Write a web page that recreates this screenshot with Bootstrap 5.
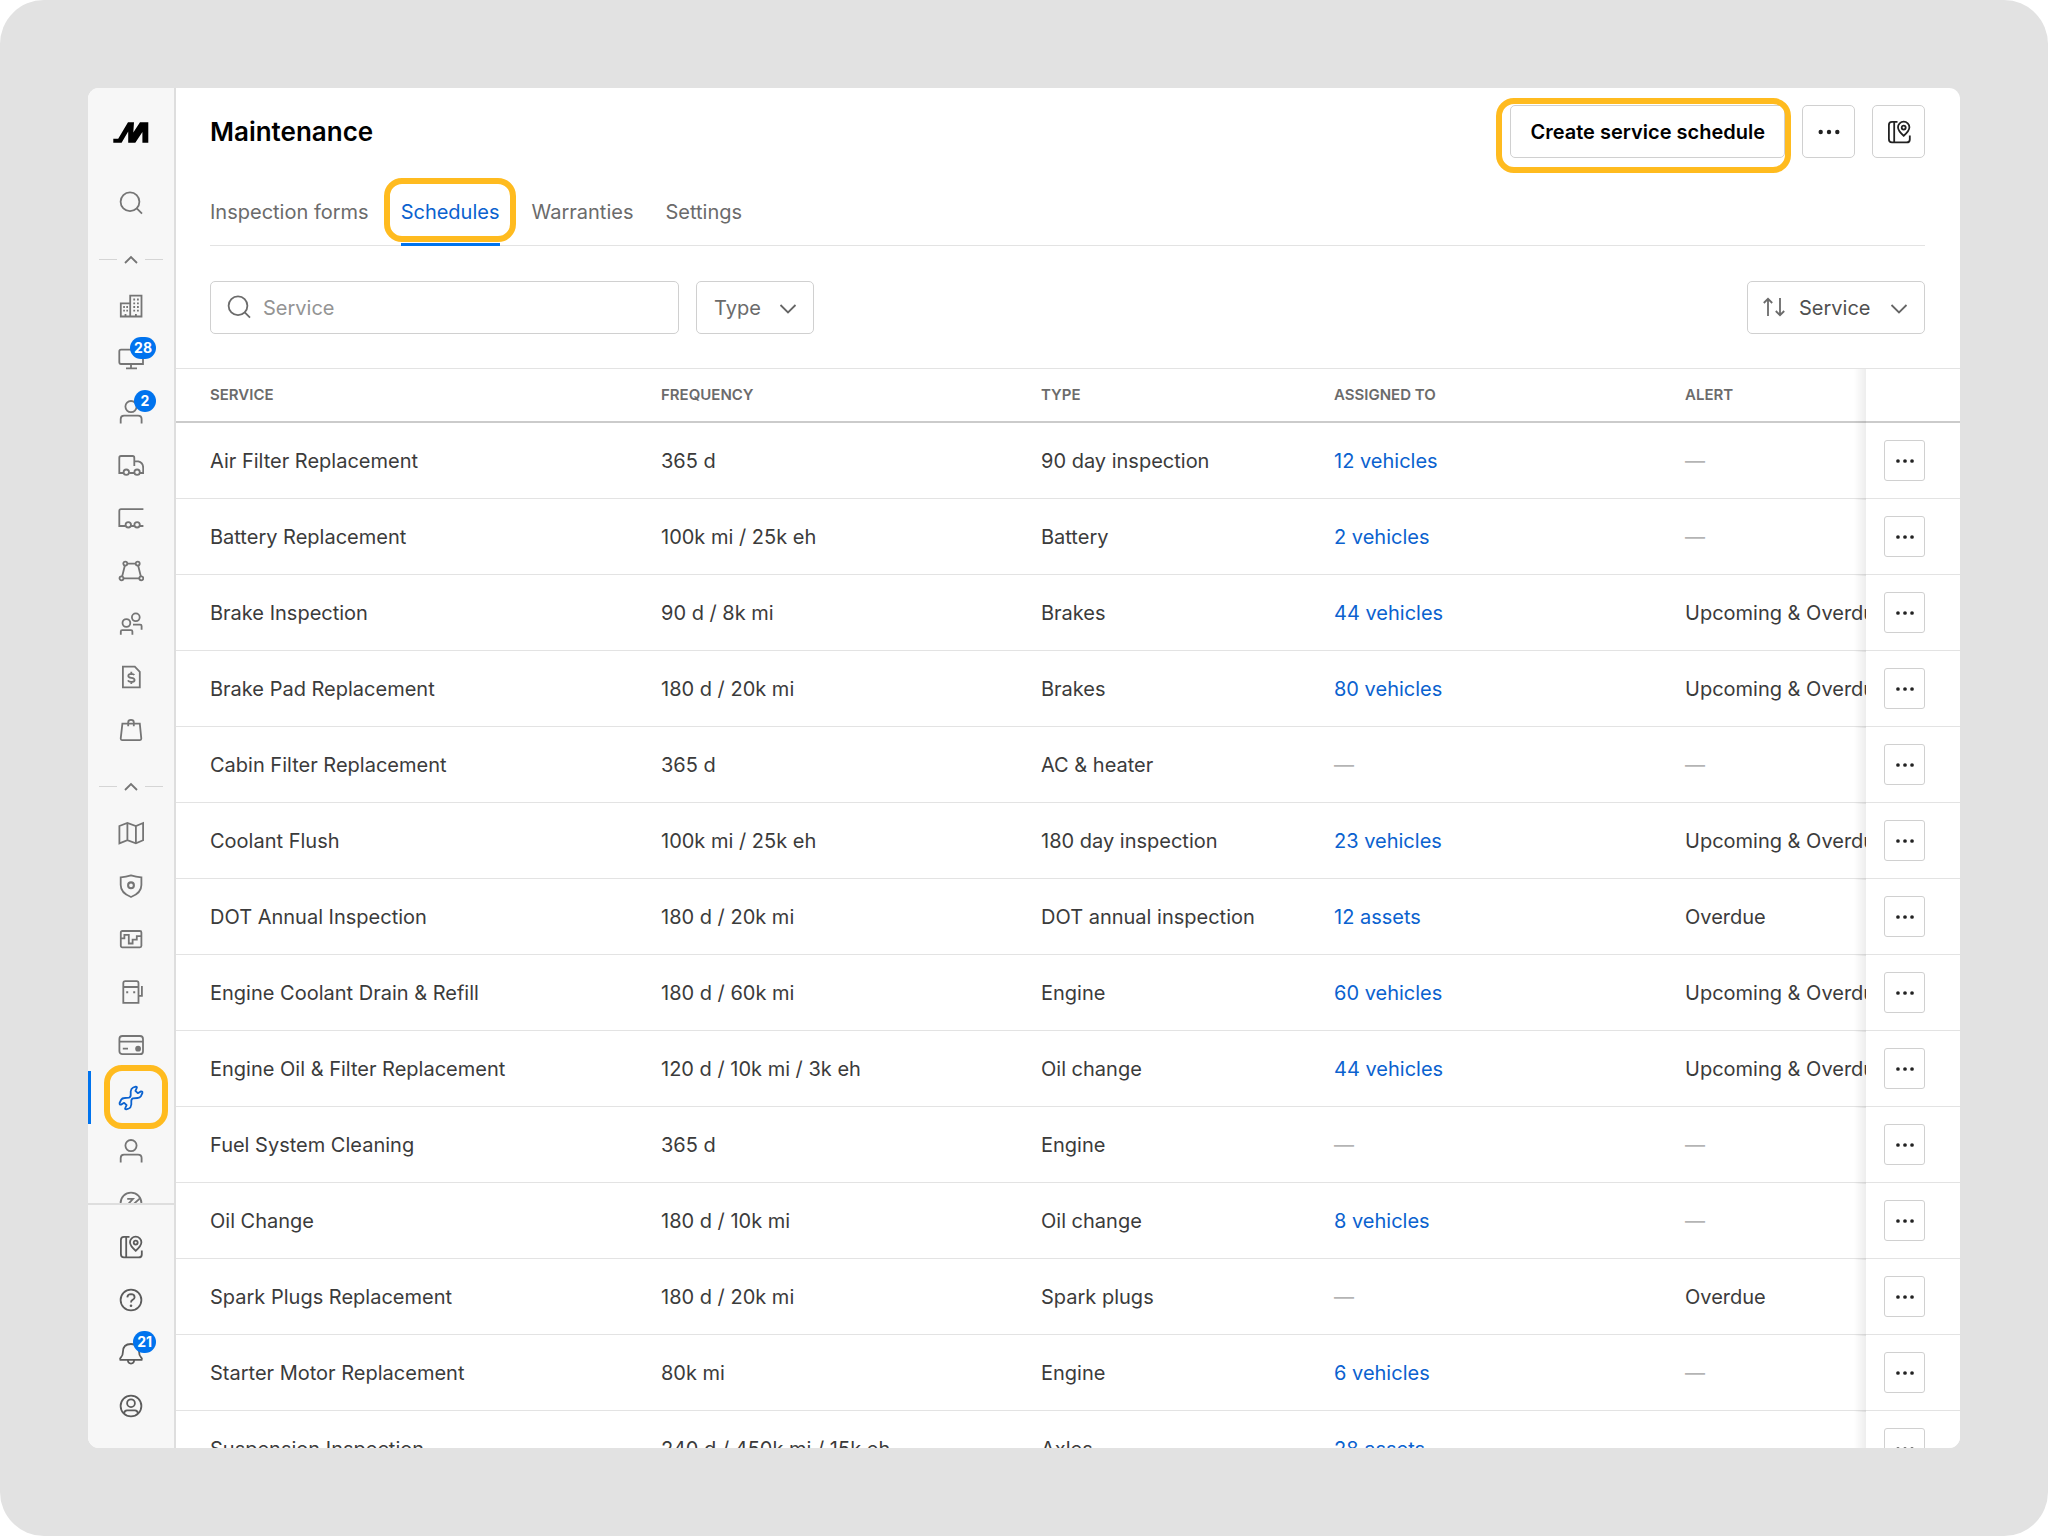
<!DOCTYPE html>
<html lang="en">
<head>
<meta charset="utf-8">
<meta name="viewport" content="width=device-width, initial-scale=1">
<title>Maintenance</title>
<link href="https://cdn.jsdelivr.net/npm/bootstrap@5.3.0/dist/css/bootstrap.min.css" rel="stylesheet">
<style>
  :root { --line: #e3e3e3; --edge: #d0d0d0; --ink: #3b3b3b; --soft: #6b6b6b; --blue: #0b62cf; --bright: #0073ee; --amber: #ffbb1f; }
  body { font-family: Inter, "Liberation Sans", sans-serif; font-size: 20px; line-height: 24px; color: var(--ink); background: #fff; }
  .stage { height: 100vh; padding: 88px; background: #e2e2e2; border-radius: 44px; }
  .app-window { border-radius: 11px; background: #fff; }
  svg { fill: none; stroke: currentColor; stroke-width: 1.8; flex: none; display: block; }
  svg .solid { fill: currentColor; stroke: none; }

  .rail { width: 88px; flex: none; background: #f7f7f7; border-right: 2px solid #dedede; }
  .rail-scroll, .page-main { min-height: 0; min-width: 0; }
  .rail-logo { height: 88px; color: #000; }
  .rail-link { height: 53px; color: #757575; }
  .rail-foot { border-top: 2px solid #dedede; padding: 15px 0 16px; }
  .rail-foot .rail-link { color: #5c5c5c; }
  .rail-link.active { color: var(--blue); }
  .rail-link.active::before { content: ""; position: absolute; left: 0; top: 0; bottom: 0; width: 3px; background: var(--bright); }
  .rail-split { height: 50px; padding: 10px 11px 0; background: none; border: 0; color: #757575; }
  .rail-split::before, .rail-split::after { content: ""; width: 18px; height: 1px; background: #d5d5d5; }
  .rail-count { position: absolute; top: 5px; right: 18px; min-width: 22px; height: 22px; padding: 0 4px; border-radius: 11px; background: var(--bright); color: #fff; font-size: 14px; font-weight: 700; line-height: 22px; text-align: center; }
  .ring { position: absolute; border: 6px solid var(--amber); border-radius: 18px; pointer-events: none; }
  .ring-rail { width: 64px; height: 64px; left: 16px; top: -6px; }
  .ring-tab { inset: 0 -16px 3px -17px; }
  .ring-create { inset: -7px -6px -15px -14px; }

  .page-head { padding: 17px 35px 34px 34px; }
  .head-actions { gap: 17px; }
  h1 { font-size: 26px; line-height: 32px; font-weight: 600; color: #000; }
  .tool-btn { height: 53px; min-width: 53px; border: 1px solid var(--edge); border-radius: 5px; background: #fff; color: #222; }
  .create-btn { padding: 0 19px; font-weight: 600; color: #000; }
  .page-tabs { margin-top: 20px; gap: 32px; border-bottom: 1px solid var(--line); }
  .page-tabs a { padding: 22px 0 21px; color: var(--soft); }
  .page-tabs a.active { color: var(--blue); }
  .page-tabs a.active::after { content: ""; position: absolute; left: 0; right: 0; bottom: -1px; height: 3px; background: var(--bright); }
  .filters { margin-top: 35px; gap: 17px; }
  .search-box { width: 469px; }
  .lead-icon { position: absolute; left: 16px; top: 13px; color: var(--soft); pointer-events: none; }
  .field { height: 53px; border: 1px solid var(--edge); border-radius: 5px; font-size: 20px; line-height: 24px; color: #505050; }
  .field::placeholder { color: #949494; }
  .search-box .field { padding: 0 16px 0 52px; }
  select.field { padding: 0 40px 0 17px; width: 118px; color: var(--soft); background-position: right 16px center; background-size: 18px 18px;
    --bs-form-select-bg-img: url("data:image/svg+xml,%3Csvg xmlns='http://www.w3.org/2000/svg' viewBox='0 0 18 18' fill='none' stroke='%23666' stroke-width='1.8'%3E%3Cpath d='M1.5 6 L9 13.5 L16.5 6'/%3E%3C/svg%3E"); }
  select.sort-field { width: 178px; padding-left: 51px; color: #505050; }

  .schedule-scroll { border-top: 1px solid var(--line); }
  .schedule-table { width: 103%; table-layout: fixed; border-collapse: separate; border-spacing: 0; }
  .schedule-table th { height: 54px; padding: 0 0 0 17px; border-bottom: 2px solid #cbcbcb; font-size: 15px; line-height: 20px; font-weight: 600; color: var(--soft); }
  .schedule-table td { height: 76px; padding: 0 0 0 17px; border-bottom: 1px solid var(--line); white-space: nowrap; }
  .schedule-table th:first-child, .schedule-table td:first-child { padding-left: 34px; }
  .schedule-table td a { color: var(--blue); }
  .schedule-table .pinned { position: sticky; right: 0; padding: 0 0 0 18px; background: #fff; }
  .pinned::before { content: ""; position: absolute; left: -12px; top: 0; bottom: -2px; width: 12px; background: linear-gradient(to right, rgba(0,0,0,0), rgba(0,0,0,.07)); }
  .none { color: #b4b4b4; }
  .row-btn { width: 41px; height: 41px; border: 1px solid var(--edge); border-radius: 3px; background: #fff; color: #222; }
  .c-service { width: 468px; } .c-freq { width: 380px; } .c-type { width: 293px; } .c-assigned { width: 351px; } .c-pin { width: 94px; }
</style>
</head>
<body>

<svg class="d-none" aria-hidden="true">
  <symbol id="i-search" viewBox="0 0 26 26"><circle cx="12" cy="11.7" r="9.4"/><path d="M18.5 18.2 L24 23.7"/></symbol>
  <symbol id="i-book" viewBox="0 0 26 26"><path d="M11.5 2.9 H6 Q2.9 2.9 2.9 6 V20 Q2.9 23.4 6 23.4 H20.6 Q23.8 23.4 23.8 20.4 V16.5 M8.2 2.9 V23.4"/><path d="M17.7 16.8 Q12 11.8 12 8.3 A5.7 5.6 0 0 1 23.4 8.3 Q23.4 11.8 17.7 16.8 Z"/><circle cx="17.7" cy="8.6" r="2"/></symbol>
  <symbol id="i-person" viewBox="0 0 26 26"><circle cx="13" cy="7.6" r="5.6"/><path d="M2.7 24.6 V20 Q2.7 16.6 6 16.6 H20 Q23.6 16.6 23.6 20 V24.6"/></symbol>
  <symbol id="i-dots" viewBox="0 0 26 26"><g class="solid"><circle cx="4.7" cy="13" r="2.2"/><circle cx="13" cy="13" r="2.2"/><circle cx="21.3" cy="13" r="2.2"/></g></symbol>
</svg>

<div class="stage">
  <div class="app-window d-flex h-100 overflow-hidden">

    <nav class="rail d-flex flex-column" aria-label="Main">
      <div class="rail-scroll flex-fill overflow-hidden">
        <a href="#" class="rail-logo d-flex align-items-center justify-content-center" aria-label="Home">
          <svg width="36" height="21" viewBox="0 0 36 21"><path class="solid" d="M0.3 20.7 V16.7 H5.2 L15 0.3 H21 L20.3 10.5 L27 0.3 H35.3 V20.7 H29.4 V10 L22.3 20.7 H15.2 V9.6 L8.6 20.7 Z"/></svg>
        </a>
        <a href="#" class="rail-link d-flex align-items-center justify-content-center" aria-label="Search"><svg width="26" height="26"><use href="#i-search"/></svg></a>

        <button class="rail-split d-flex w-100 align-items-center justify-content-between" aria-label="Collapse assets"><svg width="14" height="9" viewBox="0 0 14 9"><path d="M1 8 L7 2 L13 8"/></svg></button>

        <a href="#" class="rail-link d-flex align-items-center justify-content-center" aria-label="Facilities"><svg width="26" height="26" viewBox="0 0 26 26"><path d="M12.2 2.7 H23.5 V23.5 H12.2 Z M12.2 10.4 H2.8 V23.5 H12.2"/><path d="M15.3 6.5 h1.8 M19 6.5 h1.8 M15.3 10.3 h1.8 M19 10.3 h1.8 M15.3 14 h1.8 M19 14 h1.8 M15.3 17.6 h1.8 M19 17.6 h1.8 M5.2 14 h1.7 M8.3 14 h1.7 M5.2 17.7 h1.7 M8.3 17.7 h1.7 M17.9 21 v2 M7.5 21 v2"/></svg></a>
        <a href="#" class="rail-link position-relative d-flex align-items-center justify-content-center" aria-label="Devices"><svg width="26" height="26" viewBox="0 0 26 26"><path d="M25 18 H3 Q1.3 18 1.3 16.3 V5.5 Q1.3 3.7 3 3.7 H23.4 Q25 3.7 25 5.5 Z M13 18 V22 M8 22.4 H19"/></svg><span class="rail-count">28</span></a>
        <a href="#" class="rail-link position-relative d-flex align-items-center justify-content-center" aria-label="Drivers"><svg width="26" height="26"><use href="#i-person"/></svg><span class="rail-count">2</span></a>
        <a href="#" class="rail-link d-flex align-items-center justify-content-center" aria-label="Vehicles"><svg width="26" height="26" viewBox="0 0 26 26"><path d="M5.4 21 H1.3 V5.8 Q1.3 4 3 4 H14.6 Q16.3 4 16.3 5.8 V14 M16.3 9.4 H20.3 Q25.2 10.5 25.2 16 V21 H22 M11.2 21 H16.2"/><circle cx="8.3" cy="20.2" r="2.7"/><circle cx="19.1" cy="20.2" r="2.7"/></svg></a>
        <a href="#" class="rail-link d-flex align-items-center justify-content-center" aria-label="Trailers"><svg width="26" height="26" viewBox="0 0 26 26"><path d="M25.4 4.2 H3 Q1.3 4.2 1.3 6 V21 H7.5 M22 21 H25.4 M13 21 H16.4"/><circle cx="10.3" cy="19.8" r="2.7"/><circle cx="19.1" cy="19.8" r="2.7"/></svg></a>
        <a href="#" class="rail-link d-flex align-items-center justify-content-center" aria-label="Geofences"><svg width="26" height="26" viewBox="0 0 26 26"><path d="M9.3 5.7 H17.7 M6.8 7.8 L4.2 18.2 M20.2 7.8 L22.8 18.2 M5.6 20.3 H21.4"/><circle cx="7.3" cy="5.6" r="2"/><circle cx="19.7" cy="5.6" r="2"/><circle cx="3.5" cy="20.3" r="2"/><circle cx="23.3" cy="20.3" r="2"/></svg></a>
        <a href="#" class="rail-link d-flex align-items-center justify-content-center" aria-label="Groups"><svg width="26" height="26" viewBox="0 0 26 26"><circle cx="8.4" cy="12" r="3.9"/><circle cx="17.8" cy="6.3" r="3.9"/><path d="M2.8 23.8 V20.6 Q2.8 19.2 4.2 19.2 H13 Q14.4 19.2 14.4 20.6 V23.8 M15 13.7 H22.2 Q23.6 13.7 23.6 15.1 V18.7"/></svg></a>
        <a href="#" class="rail-link d-flex align-items-center justify-content-center" aria-label="Billing"><svg width="26" height="26" viewBox="0 0 26 26"><path d="M4.9 2.7 H16.8 L21.8 7.8 V23.4 H4.9 Z"/><path d="M16.3 11 Q15.6 9.8 13.3 9.8 Q10.3 9.9 10.3 12 Q10.3 13.5 13.3 13.8 Q16.6 14.1 16.6 16 Q16.6 18 13.3 18 Q10.6 18 9.9 16.4 M13.3 7.8 V9.8 M13.3 18 V20"/></svg></a>
        <a href="#" class="rail-link d-flex align-items-center justify-content-center" aria-label="Marketplace"><svg width="26" height="26" viewBox="0 0 26 26"><path d="M4.4 6.6 H21.8 L23.3 21.6 Q23.3 23.1 22 23.1 H4 Q2.7 23.1 2.7 21.6 Z M10.2 9.3 V5.2 Q10.2 2.8 13 2.8 Q15.8 2.8 15.8 5.2 V9.3"/></svg></a>

        <button class="rail-split d-flex w-100 align-items-center justify-content-between" aria-label="Collapse operations"><svg width="14" height="9" viewBox="0 0 14 9"><path d="M1 8 L7 2 L13 8"/></svg></button>

        <a href="#" class="rail-link d-flex align-items-center justify-content-center" aria-label="Map"><svg width="26" height="26" viewBox="0 0 26 26"><path d="M1.4 6 L9.4 2.9 L17.9 6 L25.1 3 V20.2 L17.9 23.4 L9.4 20.2 L1.4 23.4 Z M9.4 2.9 V20.2 M17.9 6 V23.4"/></svg></a>
        <a href="#" class="rail-link d-flex align-items-center justify-content-center" aria-label="Safety"><svg width="26" height="26" viewBox="0 0 26 26"><path d="M2.7 4.3 Q8 4 13 2.4 Q18 4 23.4 4.3 V12 Q23.4 20 13 24 Q2.7 20 2.7 12 Z"/><circle cx="13" cy="12.3" r="2.9" stroke-width="2.1"/></svg></a>
        <a href="#" class="rail-link d-flex align-items-center justify-content-center" aria-label="Reports"><svg width="26" height="26" viewBox="0 0 26 26"><rect x="2.8" y="5" width="20.6" height="16.3" rx="1.5"/><path d="M2.8 12.4 H6.4 V8.8 H10.8 V17.5 H14.6 V13.6 H18.8 V10.2 H23.4"/></svg></a>
        <a href="#" class="rail-link d-flex align-items-center justify-content-center" aria-label="Fuel"><svg width="26" height="26" viewBox="0 0 26 26"><path d="M5.3 23.8 V4.2 Q5.3 2.2 7.2 2.2 H18.6 Q20.5 2.2 20.5 4.2 V23.8 Z M5.3 8 H20.5 M20.5 16.8 H23.9 V7"/><path class="solid" d="M8.2 12.2 h2 v2 h-2z M15.2 12.2 h2 v2 h-2z"/></svg></a>
        <a href="#" class="rail-link d-flex align-items-center justify-content-center" aria-label="Cards"><svg width="26" height="26" viewBox="0 0 26 26"><rect x="1.4" y="4" width="23.6" height="18.2" rx="3"/><path d="M1.4 9.6 H25 M4.8 16.7 H10"/><circle class="solid" cx="20.1" cy="16.7" r="2.9"/></svg></a>
        <a href="#" class="rail-link active position-relative d-flex align-items-center justify-content-center" aria-label="Maintenance" aria-current="page"><svg width="26" height="26" viewBox="0 0 26 26" stroke-linejoin="round"><path d="M11 12.6 Q12.9 12 12.7 9.5 V6.5 Q13 3.4 15.2 2.5 L17.8 1.6 Q19.4 1.8 18.7 3.1 L17.4 5.8 L19.8 8.2 L23 6.4 Q24.7 6.2 24.4 8 L22.9 11.2 Q21.8 12.9 19.5 13 L15 13.4 Q13.1 14 13.3 16.5 V19.5 Q13 22.6 10.8 23.5 L8.2 24.4 Q6.6 24.2 7.3 22.9 L8.6 20.2 L6.2 17.8 L3 19.6 Q1.3 19.8 1.6 18 L3.1 14.8 Q4.2 13.1 6.5 13 Z"/></svg><span class="ring ring-rail"></span></a>
        <a href="#" class="rail-link d-flex align-items-center justify-content-center" aria-label="Workforce"><svg width="26" height="26"><use href="#i-person"/></svg></a>
        <a href="#" class="rail-link d-flex align-items-center justify-content-center" aria-label="Performance"><svg width="26" height="26" viewBox="0 0 26 26"><circle cx="13" cy="12" r="10.4"/><path d="M9.2 7.8 H15 L9.8 13.5 M22.5 6.8 L13 15.5"/></svg></a>
      </div>
      <div class="rail-foot">
        <a href="#" class="rail-link d-flex align-items-center justify-content-center" aria-label="Guides"><svg width="26" height="26"><use href="#i-book"/></svg></a>
        <a href="#" class="rail-link d-flex align-items-center justify-content-center" aria-label="Help"><svg width="26" height="26" viewBox="0 0 26 26"><circle cx="13" cy="13" r="10.4"/><path d="M9.3 10.4 Q9.6 7.2 13 7.2 Q16.6 7.3 16.6 10.2 Q16.6 12 14.6 12.9 Q13 13.6 13 15.6"/><circle class="solid" cx="13" cy="18.8" r="1.3"/></svg></a>
        <a href="#" class="rail-link position-relative d-flex align-items-center justify-content-center" aria-label="Notifications"><svg width="26" height="26" viewBox="0 0 26 26"><path d="M2.3 19.8 Q1.6 18.4 3 17.3 Q4.9 15.6 4.9 12 Q4.9 4 13 4 Q21.1 4 21.1 12 Q21.1 15.6 23 17.3 Q24.4 18.4 23.7 19.8 Z M9.8 19.8 Q10 23.6 13 23.6 Q16 23.6 16.2 19.8"/></svg><span class="rail-count">21</span></a>
        <a href="#" class="rail-link d-flex align-items-center justify-content-center" aria-label="Account"><svg width="26" height="26" viewBox="0 0 26 26"><circle cx="13" cy="13" r="10.4"/><circle cx="13" cy="10.2" r="3.9"/><path d="M6 20.6 Q6.4 17.3 9 17.3 H17 Q19.6 17.3 20 20.6"/></svg></a>
      </div>
    </nav>

    <main class="page-main flex-fill overflow-hidden">
      <header class="page-head">
        <div class="d-flex align-items-center">
          <h1 class="m-0 me-auto">Maintenance</h1>
          <div class="head-actions d-flex">
            <div class="position-relative">
              <button type="button" class="tool-btn create-btn">Create service schedule</button>
              <span class="ring ring-create"></span>
            </div>
            <button type="button" class="tool-btn d-flex align-items-center justify-content-center p-0" aria-label="More actions"><svg width="26" height="26"><use href="#i-dots"/></svg></button>
            <button type="button" class="tool-btn d-flex align-items-center justify-content-center p-0" aria-label="Guide"><svg width="26" height="26"><use href="#i-book"/></svg></button>
          </div>
        </div>

        <nav class="page-tabs d-flex" aria-label="Maintenance sections">
          <a href="#" class="text-decoration-none">Inspection forms</a>
          <a href="#" class="text-decoration-none active position-relative" aria-current="page">Schedules<span class="ring ring-tab"></span></a>
          <a href="#" class="text-decoration-none">Warranties</a>
          <a href="#" class="text-decoration-none">Settings</a>
        </nav>

        <form class="filters d-flex">
          <div class="search-box position-relative">
            <label for="q" class="visually-hidden">Search service</label>
            <input id="q" type="text" class="field form-control" placeholder="Service">
            <svg class="lead-icon" width="26" height="26"><use href="#i-search"/></svg>
          </div>
          <div>
            <label for="type" class="visually-hidden">Type</label>
            <select id="type" class="field form-select"><option>Type</option></select>
          </div>
          <div class="position-relative ms-auto">
            <label for="sort" class="visually-hidden">Sort by</label>
            <select id="sort" class="field sort-field form-select"><option>Service</option></select>
            <svg class="lead-icon" width="24" height="26" viewBox="0 0 24 26"><path d="M5 22 V5 M0.8 9 L5 4.8 L9.2 9 M17 4 V21 M12.8 17 L17 21.2 L21.2 17"/></svg>
          </div>
        </form>
      </header>

      <div class="schedule-scroll overflow-hidden">
        <table class="schedule-table">
          <colgroup><col class="c-service"><col class="c-freq"><col class="c-type"><col class="c-assigned"><col><col class="c-pin"></colgroup>
          <thead><tr><th>SERVICE</th><th>FREQUENCY</th><th>TYPE</th><th>ASSIGNED TO</th><th>ALERT</th><th class="pinned"></th></tr></thead>
          <tbody id="rows"></tbody>
        </table>
      </div>
    </main>
  </div>
</div>

<script src="https://cdn.jsdelivr.net/npm/bootstrap@5.3.0/dist/js/bootstrap.bundle.min.js"></script>
<script>
  const schedules = [
    ["Air Filter Replacement", "365 d", "90 day inspection", "12 vehicles", ""],
    ["Battery Replacement", "100k mi / 25k eh", "Battery", "2 vehicles", ""],
    ["Brake Inspection", "90 d / 8k mi", "Brakes", "44 vehicles", "Upcoming & Overdue"],
    ["Brake Pad Replacement", "180 d / 20k mi", "Brakes", "80 vehicles", "Upcoming & Overdue"],
    ["Cabin Filter Replacement", "365 d", "AC & heater", "", ""],
    ["Coolant Flush", "100k mi / 25k eh", "180 day inspection", "23 vehicles", "Upcoming & Overdue"],
    ["DOT Annual Inspection", "180 d / 20k mi", "DOT annual inspection", "12 assets", "Overdue"],
    ["Engine Coolant Drain & Refill", "180 d / 60k mi", "Engine", "60 vehicles", "Upcoming & Overdue"],
    ["Engine Oil & Filter Replacement", "120 d / 10k mi / 3k eh", "Oil change", "44 vehicles", "Upcoming & Overdue"],
    ["Fuel System Cleaning", "365 d", "Engine", "", ""],
    ["Oil Change", "180 d / 10k mi", "Oil change", "8 vehicles", ""],
    ["Spark Plugs Replacement", "180 d / 20k mi", "Spark plugs", "", "Overdue"],
    ["Starter Motor Replacement", "80k mi", "Engine", "6 vehicles", ""],
    ["Suspension Inspection", "240 d / 450k mi / 15k eh", "Axles", "28 assets", ""]
  ];
  const esc = s => s.replace(/&/g, "&amp;");
  const none = '<span class="none">—</span>';
  document.getElementById("rows").innerHTML = schedules.map(([name, freq, type, who, alert]) => `
    <tr><td>${esc(name)}</td><td>${freq}</td><td>${esc(type)}</td>
    <td>${who ? `<a href="#" class="text-decoration-none">${who}</a>` : none}</td>
    <td>${alert ? esc(alert) : none}</td>
    <td class="pinned"><button type="button" class="row-btn d-flex align-items-center justify-content-center p-0" aria-label="Actions for ${esc(name)}"><svg width="22" height="22"><use href="#i-dots"/></svg></button></td></tr>`).join("");
</script>
</body>
</html>
